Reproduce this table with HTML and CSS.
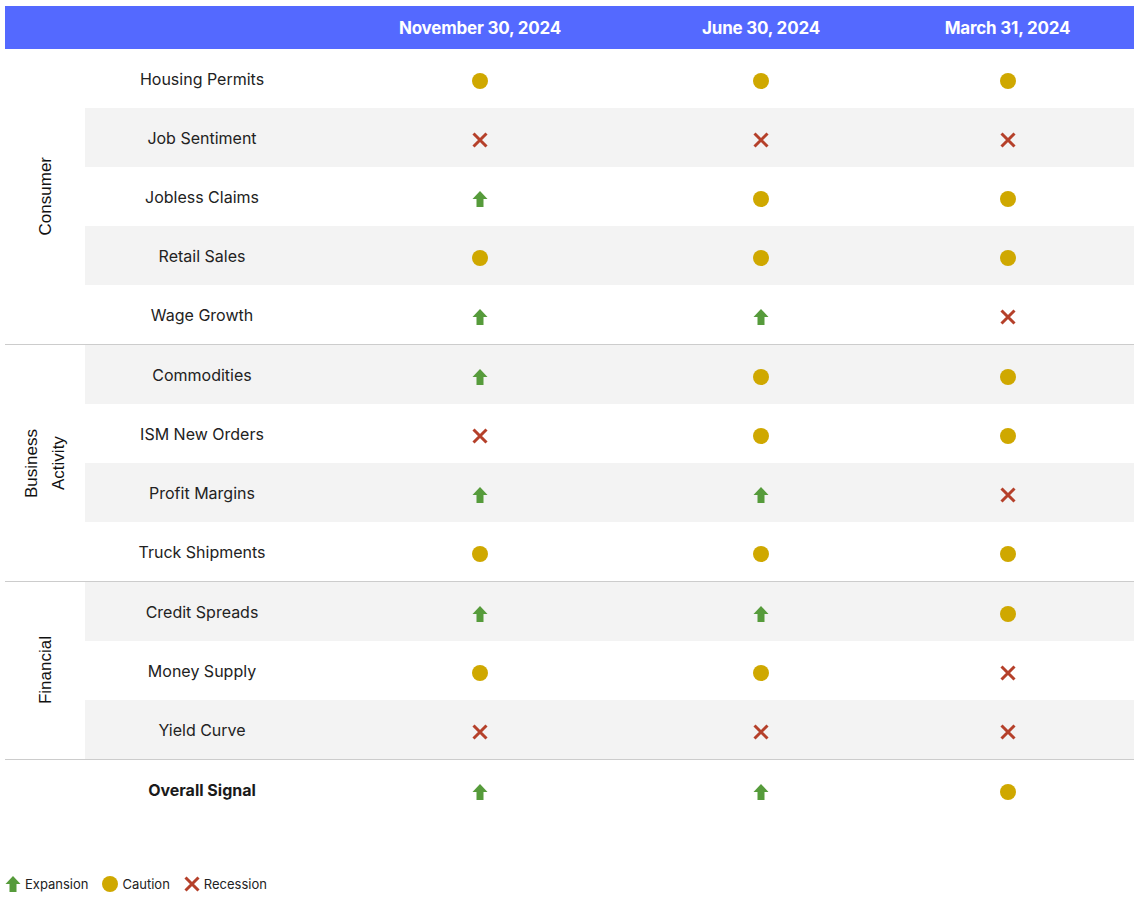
FILE: index.html
```html
<!DOCTYPE html>
<html>
<head>
<meta charset="utf-8">
<link rel="stylesheet" href="styles.css">
</head>
<body>
<svg width="0" height="0" class="defs">
  <defs>
    <symbol id="up" viewBox="0 0 16 16"><path d="M8 0 L15.5 8 L11.5 8 L11.5 16 L4.5 16 L4.5 8 L0.5 8 Z" fill="#569b3b"/></symbol>
    <symbol id="dot" viewBox="0 0 16 16"><circle cx="8" cy="8" r="8" fill="#cfa800"/></symbol>
    <symbol id="x" viewBox="0 0 16 16"><path d="M1.5 1.5 L14.5 14.5 M14.5 1.5 L1.5 14.5" stroke="#b5402a" stroke-width="3" stroke-linecap="butt" fill="none"/></symbol>
  </defs>
</svg>
<div class="page">
  <div class="header">
    <div></div>
    <div></div>
    <div class="hcell">November 30, 2024</div>
    <div class="hcell">June 30, 2024</div>
    <div class="hcell">March 31, 2024</div>
  </div>

  <div class="group">
    <div class="glabel"><span>Consumer</span></div>
    <div class="rows">
      <div class="row"><div class="name">Housing Permits</div><div class="cell"><svg class="ic"><use href="#dot"/></svg></div><div class="cell"><svg class="ic"><use href="#dot"/></svg></div><div class="cell"><svg class="ic"><use href="#dot"/></svg></div></div>
      <div class="row alt"><div class="name">Job Sentiment</div><div class="cell"><svg class="ic"><use href="#x"/></svg></div><div class="cell"><svg class="ic"><use href="#x"/></svg></div><div class="cell"><svg class="ic"><use href="#x"/></svg></div></div>
      <div class="row"><div class="name">Jobless Claims</div><div class="cell"><svg class="ic"><use href="#up"/></svg></div><div class="cell"><svg class="ic"><use href="#dot"/></svg></div><div class="cell"><svg class="ic"><use href="#dot"/></svg></div></div>
      <div class="row alt"><div class="name">Retail Sales</div><div class="cell"><svg class="ic"><use href="#dot"/></svg></div><div class="cell"><svg class="ic"><use href="#dot"/></svg></div><div class="cell"><svg class="ic"><use href="#dot"/></svg></div></div>
      <div class="row"><div class="name">Wage Growth</div><div class="cell"><svg class="ic"><use href="#up"/></svg></div><div class="cell"><svg class="ic"><use href="#up"/></svg></div><div class="cell"><svg class="ic"><use href="#x"/></svg></div></div>
    </div>
  </div>

  <div class="group">
    <div class="glabel"><span>Business<br>Activity</span></div>
    <div class="rows">
      <div class="row alt"><div class="name">Commodities</div><div class="cell"><svg class="ic"><use href="#up"/></svg></div><div class="cell"><svg class="ic"><use href="#dot"/></svg></div><div class="cell"><svg class="ic"><use href="#dot"/></svg></div></div>
      <div class="row"><div class="name">ISM New Orders</div><div class="cell"><svg class="ic"><use href="#x"/></svg></div><div class="cell"><svg class="ic"><use href="#dot"/></svg></div><div class="cell"><svg class="ic"><use href="#dot"/></svg></div></div>
      <div class="row alt"><div class="name">Profit Margins</div><div class="cell"><svg class="ic"><use href="#up"/></svg></div><div class="cell"><svg class="ic"><use href="#up"/></svg></div><div class="cell"><svg class="ic"><use href="#x"/></svg></div></div>
      <div class="row"><div class="name">Truck Shipments</div><div class="cell"><svg class="ic"><use href="#dot"/></svg></div><div class="cell"><svg class="ic"><use href="#dot"/></svg></div><div class="cell"><svg class="ic"><use href="#dot"/></svg></div></div>
    </div>
  </div>

  <div class="group">
    <div class="glabel"><span>Financial</span></div>
    <div class="rows">
      <div class="row alt"><div class="name">Credit Spreads</div><div class="cell"><svg class="ic"><use href="#up"/></svg></div><div class="cell"><svg class="ic"><use href="#up"/></svg></div><div class="cell"><svg class="ic"><use href="#dot"/></svg></div></div>
      <div class="row"><div class="name">Money Supply</div><div class="cell"><svg class="ic"><use href="#dot"/></svg></div><div class="cell"><svg class="ic"><use href="#dot"/></svg></div><div class="cell"><svg class="ic"><use href="#x"/></svg></div></div>
      <div class="row alt"><div class="name">Yield Curve</div><div class="cell"><svg class="ic"><use href="#x"/></svg></div><div class="cell"><svg class="ic"><use href="#x"/></svg></div><div class="cell"><svg class="ic"><use href="#x"/></svg></div></div>
    </div>
  </div>

  <div class="group last">
    <div class="glabel"></div>
    <div class="rows">
      <div class="row"><div class="name bold">Overall Signal</div><div class="cell"><svg class="ic"><use href="#up"/></svg></div><div class="cell"><svg class="ic"><use href="#up"/></svg></div><div class="cell"><svg class="ic"><use href="#dot"/></svg></div></div>
    </div>
  </div>

  <div class="legend">
    <div class="litem"><svg class="lic"><use href="#up"/></svg><span>Expansion</span></div>
    <div class="litem"><svg class="lic"><use href="#dot"/></svg><span>Caution</span></div>
    <div class="litem"><svg class="lic"><use href="#x"/></svg><span>Recession</span></div>
  </div>
</div>
</body>
</html>
```

FILE: styles.css
```css
html, body {
  margin: 0;
  padding: 0;
  background: #ffffff;
}
.defs {
  position: absolute;
  width: 0;
  height: 0;
}
.page {
  padding: 6px 6px 0 5px;
  font-family: Inter, "Liberation Sans", sans-serif;
  color: #1f1f1f;
}
.header {
  display: grid;
  grid-template-columns: 80px 234px 322px 240px 253px;
  height: 43px;
  background: #5469ff;
  align-items: center;
}
.hcell {
  color: #ffffff;
  font-weight: 700;
  font-size: 17px;
  text-align: center;
  letter-spacing: -0.2px;
}
.group {
  display: grid;
  grid-template-columns: 80px 1049px;
  border-bottom: 1px solid #cccccc;
}
.group.last {
  border-bottom: none;
}
.glabel {
  display: flex;
  align-items: center;
  justify-content: center;
}
.glabel span {
  writing-mode: vertical-rl;
  transform: rotate(180deg);
  font-family: "Liberation Sans", Arial, sans-serif;
  font-size: 17px;
  line-height: 27px;
  color: #111;
  text-align: center;
}
.rows {
  display: flex;
  flex-direction: column;
}
.row {
  display: grid;
  grid-template-columns: 234px 322px 240px 253px;
  height: 59px;
  align-items: center;
}
.row.alt {
  background: #f3f3f3;
}
.name {
  text-align: center;
  font-size: 16px;
  color: #222;
}
.name.bold {
  font-weight: 700;
  color: #1a1a1a;
}
.cell {
  display: flex;
  justify-content: center;
  align-items: center;
  padding-top: 5px;
}
.ic {
  width: 16px;
  height: 16px;
}
.legend {
  display: flex;
  align-items: center;
  gap: 14px;
  margin-top: 57px;
  font-size: 13px;
  color: #222;
}
.litem {
  display: flex;
  align-items: center;
  gap: 4px;
}
.lic {
  width: 16px;
  height: 16px;
}
```
